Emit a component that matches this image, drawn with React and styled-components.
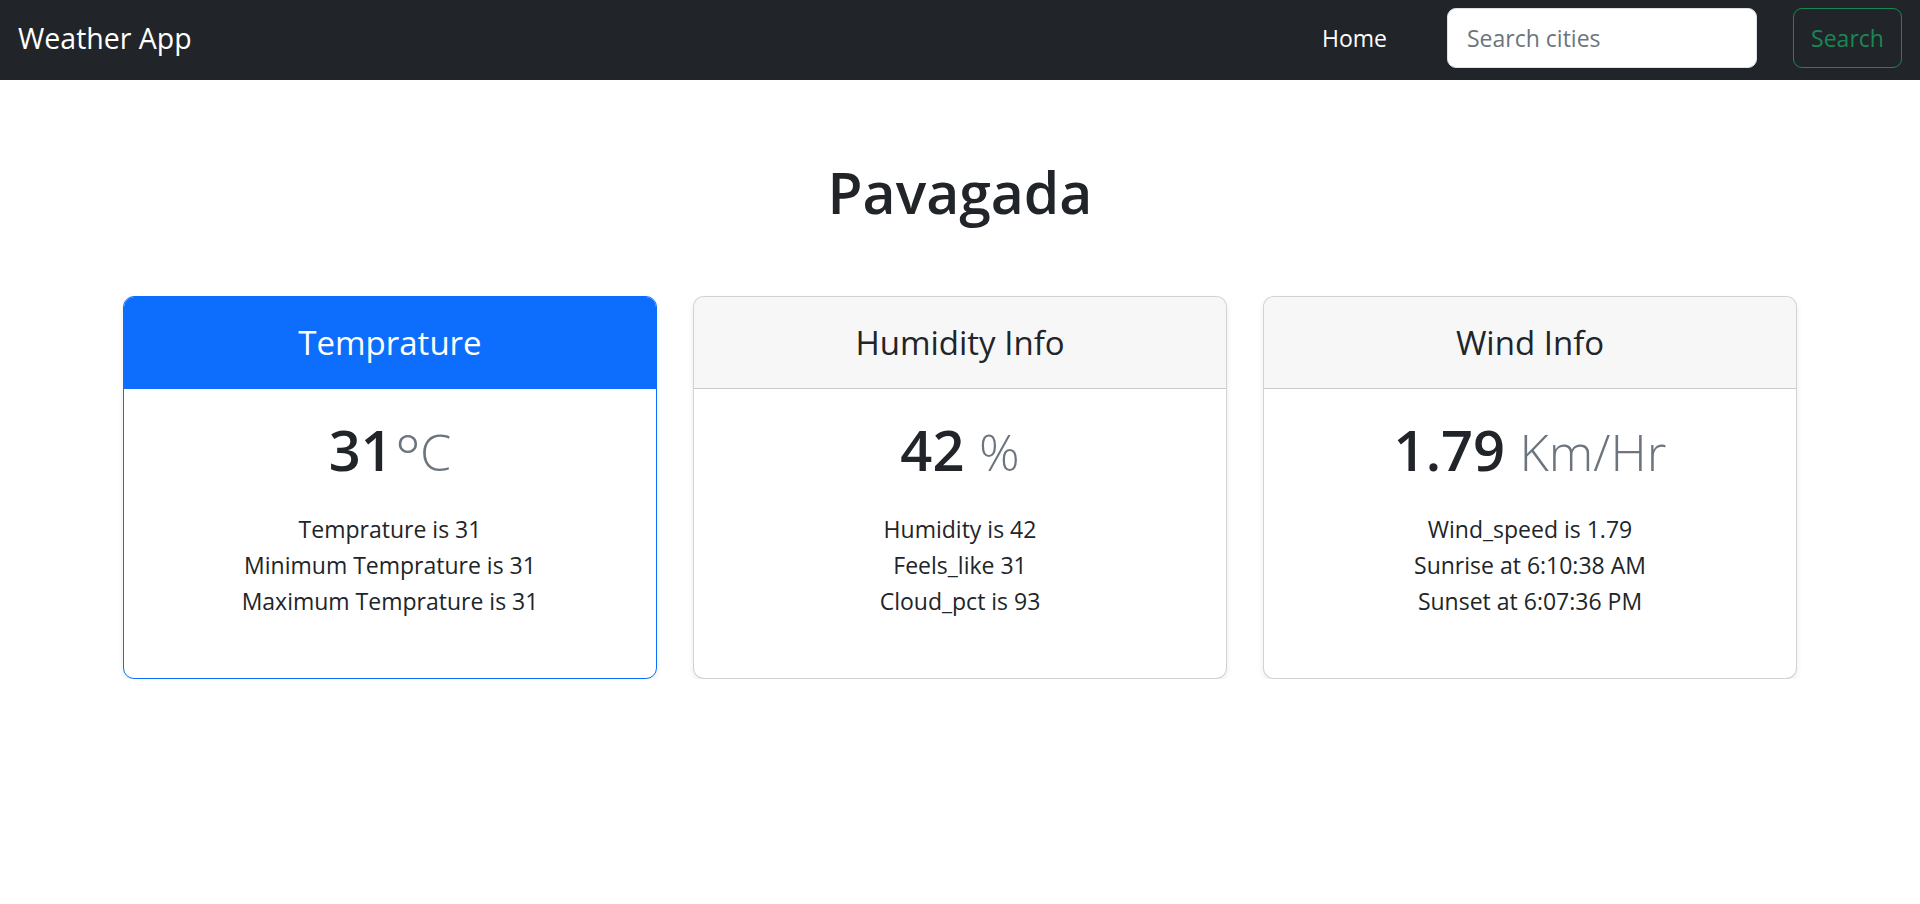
import React from "react";
import styled, { createGlobalStyle } from "styled-components";

const Global = createGlobalStyle`
  * { box-sizing: border-box; }
  html, body { margin: 0; padding: 0; background: #ffffff; }
  body {
    font-family: "Open Sans", "Noto Sans", sans-serif;
    color: #212529;
  }
`;

const Navbar = styled.nav`
  height: 80px;
  background: #212529;
  display: flex;
  align-items: center;
  padding: 0 18px 4px;
`;

const Brand = styled.a`
  font-size: 28.5px;
  line-height: 1.5;
  color: #ffffff;
  text-decoration: none;
  margin-right: auto;
`;

const NavLink = styled.a`
  font-size: 23px;
  color: #ffffff;
  text-decoration: none;
  padding: 0 12px;
  margin-right: 48px;
`;

const SearchForm = styled.form`
  display: flex;
  align-items: center;
  gap: 36px;
`;

const SearchInput = styled.input`
  width: 310px;
  height: 60px;
  border: 1px solid #dee2e6;
  border-radius: 9px;
  background: #ffffff;
  padding: 0 19px;
  font-family: inherit;
  font-size: 23px;
  color: #212529;
  outline: none;
  &::placeholder {
    color: #6c757d;
  }
`;

const OutlineButton = styled.button`
  width: 109px;
  height: 60px;
  border: 1px solid #198754;
  border-radius: 9px;
  background: transparent;
  color: #198754;
  font-family: inherit;
  font-size: 23px;
  padding: 0;
  cursor: pointer;
`;

const Title = styled.h1`
  margin: 76px 0 0;
  text-align: center;
  font-size: 57px;
  font-weight: 600;
  line-height: 72px;
  color: #212529;
`;

const CardRow = styled.div`
  width: 1674px;
  margin: 68px auto 0;
  display: grid;
  grid-template-columns: repeat(3, 1fr);
  gap: 36px;
`;

const Card = styled.div`
  border: 1px solid ${(p) => (p.$primary ? "#0d6efd" : "rgba(0, 0, 0, 0.175)")};
  border-radius: 11px;
  overflow: hidden;
  background: #ffffff;
  box-shadow: 0 3px 6px rgba(0, 0, 0, 0.075);
  text-align: center;
`;

const CardHeader = styled.div`
  padding: 24px;
  background: ${(p) => (p.$primary ? "#0d6efd" : "#f7f7f7")};
  color: ${(p) => (p.$primary ? "#ffffff" : "#212529")};
  border-bottom: 1px solid ${(p) => (p.$primary ? "#0d6efd" : "rgba(0, 0, 0, 0.175)")};
`;

const HeaderTitle = styled.h4`
  margin: 0;
  font-size: 33px;
  font-weight: 400;
  line-height: 43px;
`;

const CardBody = styled.div`
  padding: 24px;
`;

const Value = styled.h1`
  margin: 0;
  font-size: 56px;
  font-weight: 600;
  line-height: 72px;
  color: #212529;
`;

const Unit = styled.small`
  font-size: 0.9em;
  font-weight: 300;
  color: #6c757d;
`;

const Deg = styled.span`
  display: inline-block;
  font-size: 1.22em;
  line-height: 0;
  vertical-align: -0.13em;
  margin-left: 2px;
  margin-right: -1px;
`;

const InfoList = styled.ul`
  list-style: none;
  margin: 23px 0 35px;
  padding: 0;
`;

const InfoItem = styled.li`
  font-size: 23px;
  line-height: 36px;
  color: #212529;
`;

const cards = [
  {
    title: "Temprature",
    primary: true,
    value: "31",
    unit: (
      <>
        <Deg>°</Deg>C
      </>
    ),
    space: false,
    items: ["Temprature is 31", "Minimum Temprature is 31", "Maximum Temprature is 31"],
  },
  {
    title: "Humidity Info",
    value: "42",
    unit: "%",
    space: true,
    items: ["Humidity is 42", "Feels_like 31", "Cloud_pct is 93"],
  },
  {
    title: "Wind Info",
    value: "1.79",
    unit: "Km/Hr",
    space: true,
    items: ["Wind_speed is 1.79", "Sunrise at 6:10:38 AM", "Sunset at 6:07:36 PM"],
  },
];

export default function App() {
  return (
    <>
      <Global />
      <Navbar>
        <Brand href="#">Weather App</Brand>
        <NavLink href="#">Home</NavLink>
        <SearchForm onSubmit={(e) => e.preventDefault()}>
          <SearchInput type="search" placeholder="Search cities" />
          <OutlineButton type="submit">Search</OutlineButton>
        </SearchForm>
      </Navbar>
      <Title>Pavagada</Title>
      <CardRow>
        {cards.map((c) => (
          <Card key={c.title} $primary={c.primary}>
            <CardHeader $primary={c.primary}>
              <HeaderTitle>{c.title}</HeaderTitle>
            </CardHeader>
            <CardBody>
              <Value>
                {c.value}
                {c.space ? " " : ""}
                <Unit>{c.unit}</Unit>
              </Value>
              <InfoList>
                {c.items.map((it) => (
                  <InfoItem key={it}>{it}</InfoItem>
                ))}
              </InfoList>
            </CardBody>
          </Card>
        ))}
      </CardRow>
    </>
  );
}
